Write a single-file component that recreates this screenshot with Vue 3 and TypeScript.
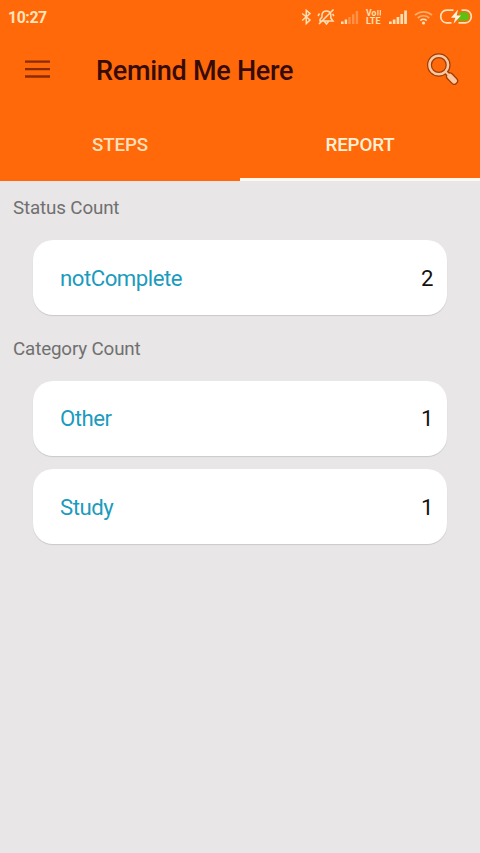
<template>
  <div class="screen">
    <header class="header">
      <!-- status bar -->
      <div class="status-bar">
        <span class="time">10:27</span>
        <svg class="status-icons" width="176" height="18" viewBox="0 0 176 18">
          <!-- bluetooth -->
          <path class="line" d="M2.2 5.5 10 12 6.3 15.5V2.3L10 5.6 2.2 12.5" />
          <!-- muted bell -->
          <path class="line" d="M20 13V11.5L22 9V6.5A4.5 4.5 0 0 1 30.8 6.5V10L33 13ZM24.5 13.5 26.5 16 28.5 13.5M19 16 33.5 1.5M19.5 5.5 18 8M32.5 6 34 8" />
          <!-- first sim -->
          <path class="fill" d="M41 13.5H43.6V16H41ZM44.7 11.5H47.1V16H44.7Z" />
          <path class="fill faded" d="M48.3 9H50.7V16H48.3ZM52 6.3H54.4V16H52ZM55.7 3H58.1V16H55.7Z" />
          <text class="volte" x="66" y="7.6">Vo</text>
          <path class="fill" d="M77.3 2H78.5V7.6H77.3ZM79.7 2H80.9V7.6H79.7Z" />
          <text class="volte lte" x="66" y="16.2">LTE</text>
          <!-- second sim -->
          <path class="fill" d="M89 13.5H91.7V16H89ZM92.8 11.5H95.5V16H92.8ZM96.6 9H99.3V16H96.6ZM100.4 6H103.1V16H100.4ZM104.2 2.5H106.9V16H104.2Z" />
          <!-- wifi -->
          <g class="wifi">
            <path d="M115 7.2A12.5 12.5 0 0 1 132 7.2M117.7 10A8.6 8.6 0 0 1 129.3 10" />
            <path class="wifi-on" d="M120.3 12.7A4.7 4.7 0 0 1 126.7 12.7" />
            <circle class="fill" cx="123.5" cy="15" r="1.6" />
          </g>
          <!-- battery -->
          <path class="charge" d="M160 4.2H165A4.3 4.3 0 0 1 165 12.8H158Z" />
          <path class="battery" d="M153.5 2.2H146.5A5.8 6.3 0 0 0 146.5 14.8H151.5M161.5 2.2H165.5A5.8 6.3 0 0 1 165.5 14.8H158.5" />
          <path class="bolt" d="M158 1.5 151 9.7H155.3L153.5 15.8 161 7.5H156.7Z" />
        </svg>
      </div>

      <!-- toolbar -->
      <div class="toolbar">
        <svg class="menu-icon" width="26" height="20" viewBox="0 0 26 20">
          <path d="M0 2.7H25M0 10.1H25M0 17.5H25" />
        </svg>
        <h1 class="title">Remind Me Here</h1>
        <svg class="search-icon" width="32" height="32" viewBox="0 0 32 32">
          <path class="handle-edge" d="M18.5 19 23.5 23.5" />
          <path class="handle-edge wide" d="M22.9 23.4 27.2 27.8" />
          <circle class="lens-edge" cx="11.8" cy="12" r="9.3" />
          <circle class="lens" cx="11.8" cy="12" r="9.3" />
          <path class="handle" d="M18.8 19.2 23.5 23.5" />
          <path class="handle wide" d="M22.9 23.4 27.2 27.8" />
        </svg>
      </div>

      <nav class="tabs">
        <button
          v-for="tab in tabs"
          :key="tab"
          class="tab"
          :class="{ active: tab === activeTab }"
          @click="activeTab = tab"
        >
          {{ tab }}
        </button>
      </nav>
    </header>

    <main class="report">
      <section v-for="group in groups" :key="group.title" class="group">
        <h2 class="group-title">{{ group.title }}</h2>
        <div v-for="item in group.items" :key="item.name" class="card">
          <span class="name">{{ item.name }}</span>
          <span class="count">{{ item.count }}</span>
        </div>
      </section>
    </main>
  </div>
</template>

<script lang="ts" setup>
import { ref } from 'vue'

interface CountItem {
  name: string
  count: number
}

interface CountGroup {
  title: string
  items: CountItem[]
}

const tabs = ['STEPS', 'REPORT']
const activeTab = ref('REPORT')

const groups: CountGroup[] = [
  {
    title: 'Status Count',
    items: [{ name: 'notComplete', count: 2 }]
  },
  {
    title: 'Category Count',
    items: [
      { name: 'Other', count: 1 },
      { name: 'Study', count: 1 }
    ]
  }
]
</script>

<style>
body {
  margin: 0;
  background: #e8e6e7;
}
</style>

<style scoped>
.screen {
  min-height: 100vh;
  background: #e8e6e7;
  font-family: Roboto, "Liberation Sans", sans-serif;
}

.header {
  background: #ff690a;
}

.status-bar {
  display: flex;
  align-items: center;
  justify-content: space-between;
  box-sizing: border-box;
  height: 34px;
  padding: 0 4px 0 8px;
}

.time {
  color: #ffe4bd;
  font-size: 15.8px;
  font-weight: 700;
  letter-spacing: -0.4px;
}

.line {
  fill: none;
  stroke: #ffe0b5;
  stroke-width: 1.5;
}

.fill {
  fill: #ffe0b5;
}

.faded {
  opacity: 0.35;
}

.volte {
  fill: #ffe0b5;
  font-size: 8.6px;
  font-weight: 700;
  line-height: 8px;
}

.lte {
  font-size: 9px;
}

.wifi path {
  fill: none;
  stroke: #ffad6b;
  stroke-width: 1.7;
}

.wifi .wifi-on {
  stroke: #ffe0b5;
}

.battery {
  fill: none;
  stroke: #ffe0b5;
  stroke-width: 1.7;
}

.charge {
  fill: #5fbf12;
}

.bolt {
  fill: #fff3dc;
}

.toolbar {
  display: flex;
  align-items: center;
  box-sizing: border-box;
  height: 73px;
  padding: 0 21px 3px 25px;
}

.menu-icon path {
  stroke: #8b2c00;
  stroke-width: 2.3;
}

.title {
  flex: 1;
  margin: 3px 0 0 45px;
  color: #370b06;
  font-size: 27px;
  font-weight: 500;
  line-height: 32px;
  letter-spacing: -0.27px;
}

.search-icon {
  fill: none;
  stroke-linecap: round;
}

.lens-edge {
  stroke: #9b3d08;
  stroke-width: 5;
}

.lens {
  stroke: #ffc79f;
  stroke-width: 2.6;
}

.handle-edge {
  stroke: #9b3d08;
  stroke-width: 4.5;
}

.handle {
  stroke: #ffc79f;
  stroke-width: 2;
}

.handle-edge.wide {
  stroke-width: 8;
}

.handle.wide {
  stroke-width: 5.4;
}

.tabs {
  display: flex;
  height: 74px;
}

.tab {
  flex: 1;
  padding: 4px 0 0;
  border: 0;
  border-bottom: 3px solid transparent;
  background: none;
  color: #ffdfb8;
  font-family: inherit;
  font-size: 18.8px;
  font-weight: 500;
  letter-spacing: -0.2px;
  cursor: pointer;
}

.tab.active {
  border-bottom-color: #fff8f0;
  color: #fff0d6;
}

.report {
  padding: 13px 33px 0;
}

.group {
  margin-bottom: 19.5px;
}

.group-title {
  margin: 0 0 18px -20px;
  color: #707070;
  font-size: 18.8px;
  font-weight: 400;
  line-height: 28px;
  letter-spacing: -0.15px;
}

.card {
  display: flex;
  align-items: center;
  justify-content: space-between;
  box-sizing: border-box;
  height: 75px;
  margin-bottom: 13.8px;
  padding: 0 13.5px 0 27px;
  border-radius: 20px;
  background: #fff;
  box-shadow: 0 1px 1px rgba(0, 0, 0, 0.13);
  font-size: 22.2px;
}

.card:last-child {
  margin-bottom: 0;
}

.name {
  color: #1b9bbd;
  letter-spacing: -0.48px;
}

.count {
  color: #111;
}
</style>
